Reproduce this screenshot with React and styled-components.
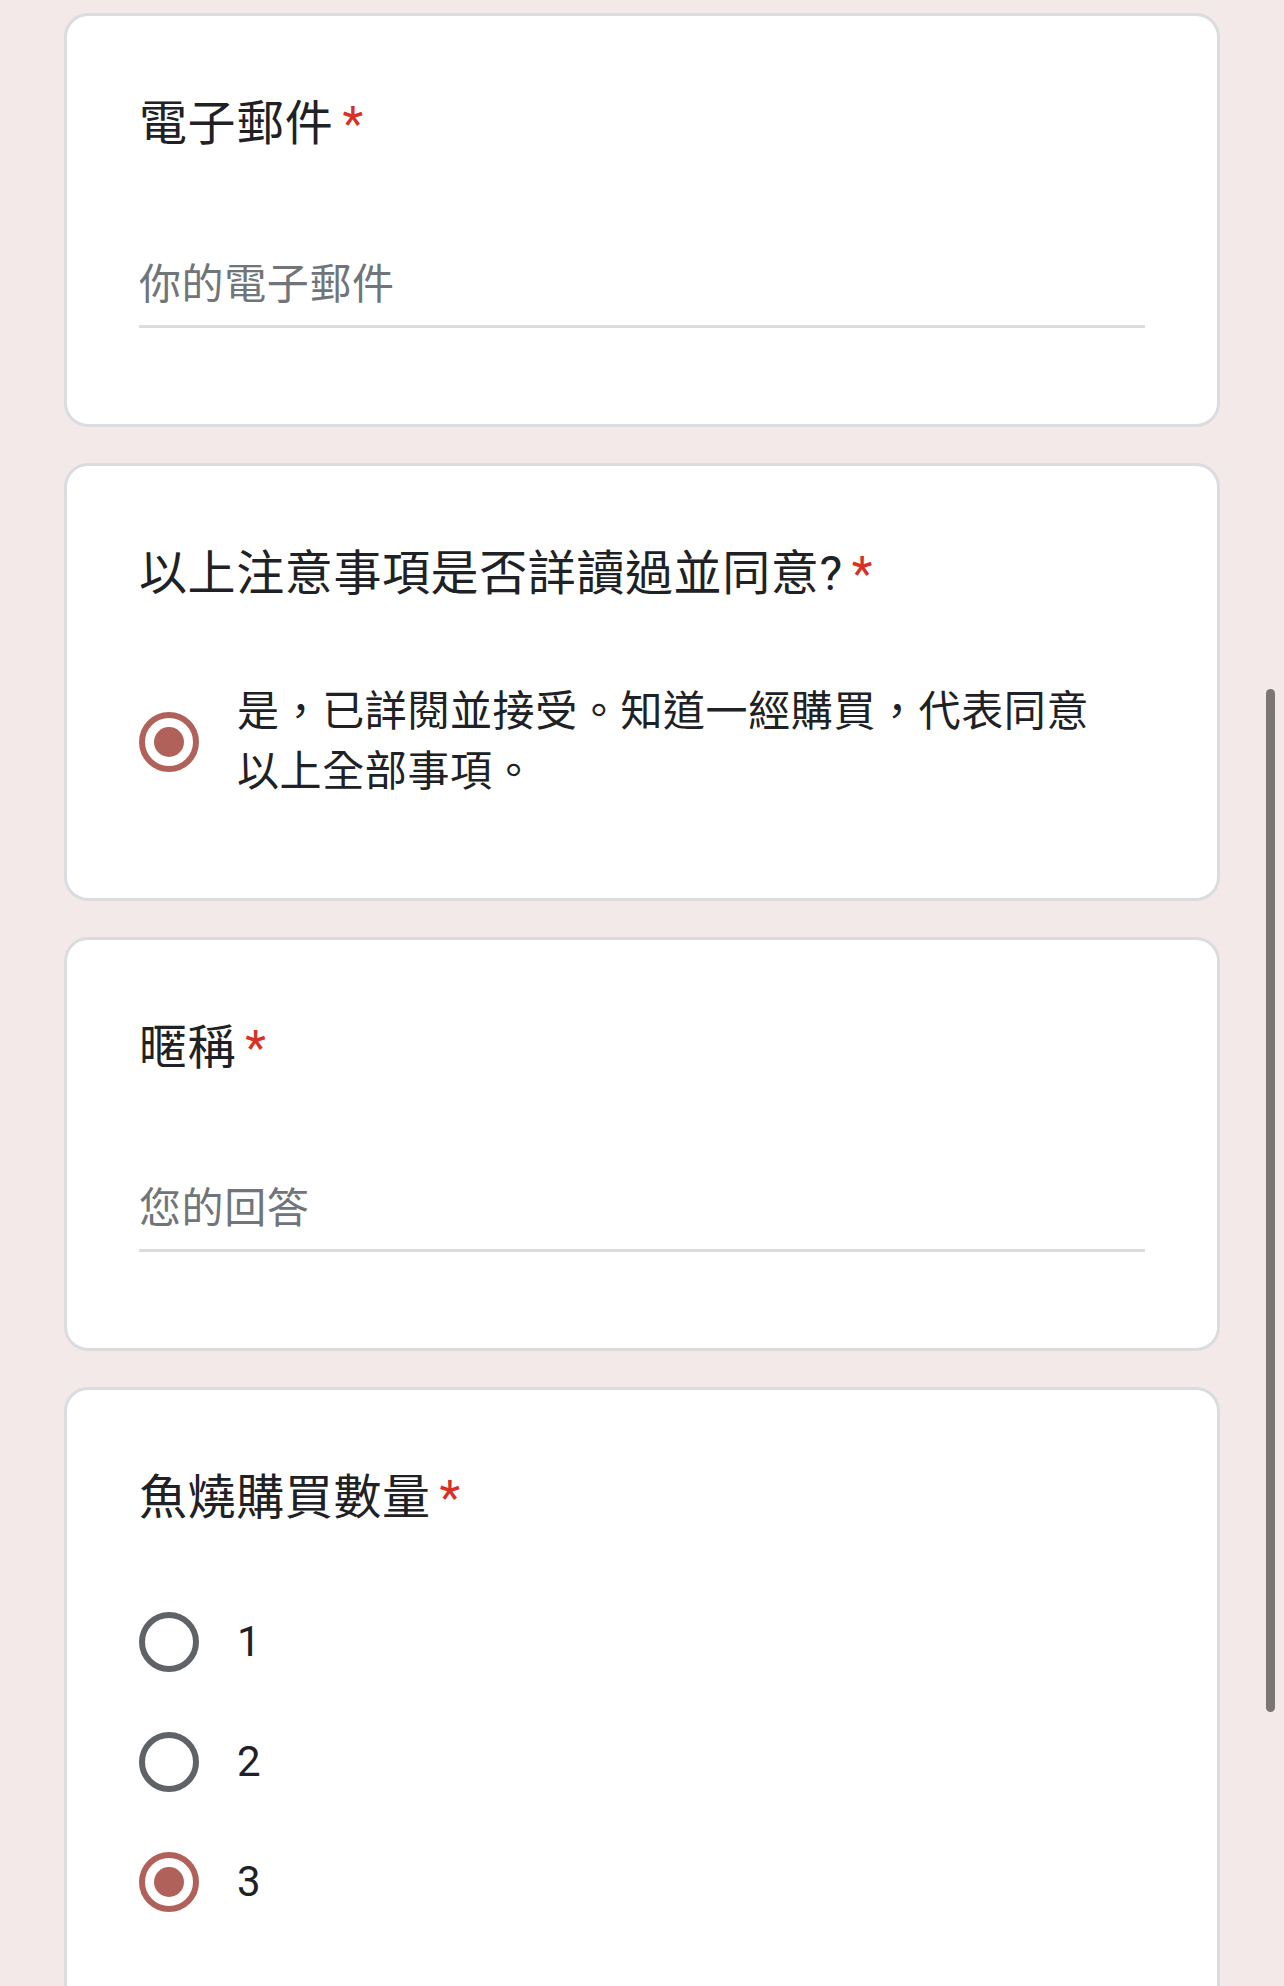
import React from "react";
import styled, { createGlobalStyle } from "styled-components";

const GlobalStyle = createGlobalStyle`
  html, body {
    margin: 0;
    padding: 0;
    background: #f3e9e9;
    overflow: hidden;
  }
  body {
    font-family: "Roboto", "Noto Sans CJK TC", "Noto Sans", sans-serif;
    color: #202124;
  }
  * { box-sizing: border-box; }
`;

const Page = styled.main`
  display: flex;
  flex-direction: column;
  gap: 36px;
  padding: 13px 64px 0;
`;

const Card = styled.section`
  background: #ffffff;
  border: 3px solid #dadce0;
  border-radius: 24px;
  padding: 72px 72px 96px;
`;

const Title = styled.h2`
  margin: 0;
  font-size: 48px;
  line-height: 72px;
  font-weight: 400;
  letter-spacing: 0.6px;
  color: #202124;
`;

const Required = styled.span`
  color: #d93025;
  margin-left: 9px;
`;

const AnswerField = styled.div`
  margin-top: 72px;
  padding: 21px 0 9px;
  border-bottom: 3px solid #dadce0;
  font-size: 42px;
  line-height: 63px;
  letter-spacing: 0.6px;
  color: #70757a;
`;

const OptionList = styled.div`
  margin-top: 72px;
  display: flex;
  flex-direction: column;
  gap: 48px;
`;

const OptionRow = styled.label`
  display: flex;
  align-items: center;
  min-height: 72px;
`;

const Radio = styled.span`
  flex: 0 0 60px;
  width: 60px;
  height: 60px;
  border-radius: 50%;
  border: 6px solid ${(p) => (p.$checked ? "#b0625a" : "#5f6368")};
  display: flex;
  align-items: center;
  justify-content: center;

  &::after {
    content: "";
    width: 30px;
    height: 30px;
    border-radius: 50%;
    background: #b0625a;
    display: ${(p) => (p.$checked ? "block" : "none")};
  }
`;

const OptionLabel = styled.span`
  margin-left: 38px;
  padding-right: 40px;
  font-size: 42px;
  line-height: 60px;
  letter-spacing: 0.6px;
  color: #202124;
`;

const Scrollbar = styled.div`
  position: fixed;
  right: 9px;
  top: 689px;
  width: 9px;
  height: 1023px;
  border-radius: 5px;
  background: #7b7575;
`;

function TextQuestion({ title, placeholder }) {
  return (
    <Card>
      <Title>
        {title}
        <Required>*</Required>
      </Title>
      <AnswerField>{placeholder}</AnswerField>
    </Card>
  );
}

function ChoiceQuestion({ title, options, selected }) {
  return (
    <Card>
      <Title>
        {title}
        <Required>*</Required>
      </Title>
      <OptionList>
        {options.map((o) => (
          <OptionRow key={o}>
            <Radio $checked={o === selected} />
            <OptionLabel>{o}</OptionLabel>
          </OptionRow>
        ))}
      </OptionList>
    </Card>
  );
}

export default function App() {
  const agree = "是，已詳閱並接受。知道一經購買，代表同意以上全部事項。";
  return (
    <>
      <GlobalStyle />
      <Page>
        <TextQuestion title="電子郵件" placeholder="你的電子郵件" />
        <ChoiceQuestion
          title="以上注意事項是否詳讀過並同意?"
          options={[agree]}
          selected={agree}
        />
        <TextQuestion title="暱稱" placeholder="您的回答" />
        <ChoiceQuestion title="魚燒購買數量" options={["1", "2", "3"]} selected="3" />
      </Page>
      <Scrollbar />
    </>
  );
}
